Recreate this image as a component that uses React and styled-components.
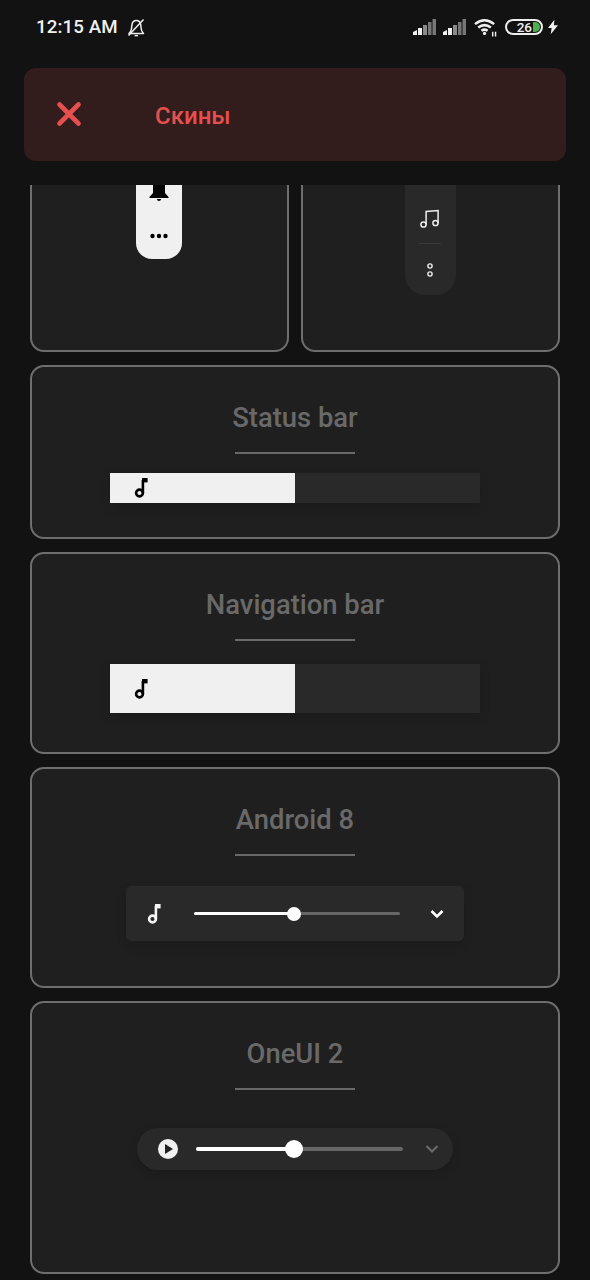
import React from "react";
import styled, { createGlobalStyle } from "styled-components";

const Global = createGlobalStyle`
  html, body { margin: 0; padding: 0; background: #121212; }
  body { font-family: Roboto, "Noto Sans", sans-serif; }
`;

const Screen = styled.div`
  width: 590px;
  height: 1280px;
  display: flex;
  flex-direction: column;
  background: #121212;
  overflow: hidden;
`;

const StatusRow = styled.div`
  height: 54px;
  flex: none;
  display: flex;
  align-items: center;
  justify-content: space-between;
  padding: 0 32px 0 36px;
  color: #f0f0f0;
`;

const StatusGroup = styled.div`
  display: flex;
  align-items: center;
  gap: ${(p) => p.$gap || 0}px;
`;

const Clock = styled.span`
  font-size: 18.7px;
  font-weight: 500;
  letter-spacing: 0.1px;
`;

const Battery = styled.div`
  width: 38px;
  height: 16px;
  box-sizing: border-box;
  border: 2px solid #eee;
  border-radius: 8px;
  display: flex;
  align-items: center;
  justify-content: flex-end;
  gap: 1px;
  padding-right: 1px;
  font-size: 13.5px;
  font-weight: 500;
  color: #eee;
`;

const BatteryFill = styled.span`
  width: 7px;
  height: 10px;
  background: #4caf50;
  border-radius: 0 5px 5px 0;
`;

const TopBar = styled.div`
  flex: none;
  height: 131px;
  padding: 14px 24px 0;
  box-sizing: border-box;
`;

const Banner = styled.div`
  height: 93px;
  border-radius: 12px;
  background: #331c1c;
  display: flex;
  align-items: center;
  padding-left: 32px;
  gap: 73px;
  color: #e5504f;
`;

const BannerTitle = styled.span`
  font-size: 24px;
  font-weight: 500;
  position: relative;
  top: 1px;
`;

const Scroller = styled.div`
  flex: 1;
  min-height: 0;
  overflow: hidden;
  padding: 0 30px;
`;

const List = styled.div`
  margin-top: -60px;
  display: flex;
  flex-direction: column;
  gap: 13px;
`;

const Pair = styled.div`
  display: grid;
  grid-template-columns: 259px 259px;
  gap: 12px;
`;

const Card = styled.div`
  box-sizing: border-box;
  height: ${(p) => p.$h}px;
  background: #1f1f1f;
  border: 2px solid #6e6e6e;
  border-radius: 14px;
  display: flex;
  flex-direction: column;
  align-items: center;
  padding-top: ${(p) => p.$top || 0}px;
`;

const Title = styled.div`
  font-size: 27.4px;
  line-height: 32px;
  font-weight: 500;
  color: #696969;
`;

const Rule = styled.div`
  width: 120px;
  height: 2px;
  background: #696969;
  margin-top: 18px;
`;

const SplitBar = styled.div`
  width: 370px;
  height: ${(p) => p.$h}px;
  margin-top: ${(p) => p.$mt}px;
  display: flex;
  background: #292929;
  box-shadow: 0 4px 10px rgba(0, 0, 0, 0.15);
`;

const SplitLight = styled.div`
  width: 185px;
  background: #f0f0f0;
  display: flex;
  align-items: center;
  padding-left: 24px;
  box-sizing: border-box;
  color: #000;
`;

const Slider = styled.div`
  display: flex;
  align-items: center;
  box-sizing: border-box;
  background: #292929;
  color: #f5f5f5;
  box-shadow: 0 4px 10px rgba(0, 0, 0, 0.15);
  width: ${(p) => p.$w}px;
  height: ${(p) => p.$h}px;
  margin-top: ${(p) => p.$mt}px;
  border-radius: ${(p) => p.$r}px;
  padding: ${(p) => p.$pad};
`;

const Spacer = styled.div`
  flex: none;
  width: ${(p) => p.$w || 0}px;
  height: ${(p) => p.$h || 0}px;
`;

const Track = styled.div`
  flex: 1;
  height: ${(p) => p.$t}px;
  background: #666;
  border-radius: 2px;
  position: relative;
`;

const TrackFill = styled.div`
  height: 100%;
  background: #fff;
  border-radius: 2px;
`;

const Thumb = styled.div`
  position: absolute;
  top: 50%;
  width: ${(p) => p.$d}px;
  height: ${(p) => p.$d}px;
  margin: ${(p) => -p.$d / 2}px 0 0 ${(p) => -p.$d / 2}px;
  border-radius: 50%;
  background: #fff;
`;

const Pill = styled.div`
  box-sizing: border-box;
  display: flex;
  flex-direction: column;
  align-items: center;
  width: ${(p) => p.$w}px;
  border-radius: 0 0 ${(p) => p.$r}px ${(p) => p.$r}px;
  background: ${(p) => p.$bg};
  height: ${(p) => p.$h}px;
  margin-right: 1px;
`;

const PillLine = styled.div`
  width: 22px;
  height: 1px;
  background: #383838;
  margin-top: 15px;
`;

const NoteSolid = () => (
  <svg width="16" height="22" viewBox="0 0 16 22" fill="none" stroke="currentColor" strokeWidth="2.6">
    <circle cx="5.5" cy="16" r="3.4" />
    <path d="M8.9 16V3" />
    <path d="M8 3.2h5.6" strokeWidth="4.4" />
  </svg>
);

const Signal = () => (
  <svg width="23" height="16" viewBox="0 0 23 16">
    <path d="M0 13 4 11V16H0Z" fill="#f0f0f0" />
    <rect x="5" y="9" width="4" height="7" fill="#f0f0f0" />
    <rect x="10" y="6" width="4" height="10" fill="#8a8a8a" />
    <rect x="15" y="3" width="3.500" height="13" fill="#777" />
    <rect x="19.500" y="0" width="3.500" height="16" fill="#777" />
  </svg>
);

const Wifi = () => (
  <svg width="23" height="19" viewBox="0 0 24 19" fill="none" stroke="#f0f0f0" strokeWidth="2.6">
    <path d="M1 6C7.500 .8 14.500 .8 21 6" />
    <path d="M4.400 9.600C8.800 6.200 13.200 6.200 17.600 9.600" />
    <path d="M7.800 12.800C10 11.300 12 11.300 14.200 12.800" />
    <circle cx="11" cy="15.700" r="1.700" fill="#f0f0f0" stroke="none" />
    <path d="M19.500 14v5M22.500 14v5" strokeWidth="1.500" />
  </svg>
);

const MutedBell = () => (
  <svg width="19" height="19" viewBox="0 0 19 19" fill="none" stroke="#eee" strokeWidth="1.5" strokeLinejoin="round">
    <path d="M2 15.5h14.5c-1.6-1.6-2.2-3-2.4-5.2L13.8 7C13.4 4.5 11.7 2.6 9.4 2.6c-2.4 0-4.2 2-4.5 4.6l-.4 3.4C4.3 12.600 3.500 14 2 15.500Z" />
    <path d="M7.600 17.600h3.400" />
    <path d="M1.500 17.500 16.500 1.500" />
  </svg>
);

const Bolt = () => (
  <svg width="10" height="16" viewBox="0 0 11 16">
    <path d="M7 0 0 9h4l-1 7 8-10H6.500L7 0Z" fill="#f0f0f0" />
  </svg>
);

const Cross = () => (
  <svg width="26" height="26" viewBox="0 0 26 26" stroke="#e5504f" strokeWidth="4.600" strokeLinecap="round" style={{ marginTop: -2 }}>
    <path d="M3.500 3.500 22.500 22.500M22.500 3.500 3.500 22.500" />
  </svg>
);

const Bell = () => (
  <svg width="20" height="22" viewBox="0 0 20 22" fill="#000">
    <path d="M4 0h12v11l3.500 4v1H.5v-1L4 11V0Z" />
    <path d="M8 17h4c0 1.200-.8 2-2 2s-2-.8-2-2Z" />
  </svg>
);

const Dots = () => (
  <svg width="18" height="6" viewBox="0 0 18 6" fill="#000">
    <circle cx="2.500" cy="3" r="2.200" />
    <circle cx="9" cy="3" r="2.200" />
    <circle cx="15.500" cy="3" r="2.200" />
  </svg>
);

const NotePair = () => (
  <svg width="20" height="19" viewBox="0 0 20 19" fill="none" stroke="#eee" strokeWidth="1.500">
    <circle cx="3.500" cy="15.500" r="2.600" />
    <circle cx="15.500" cy="14" r="2.600" />
    <path d="M6.100 15.500V2.500L18.100 1.500V14" />
  </svg>
);

const RingDots = () => (
  <svg width="8" height="16" viewBox="0 0 8 16" fill="none" stroke="#eee" strokeWidth="1.400">
    <circle cx="4" cy="4" r="2.100" />
    <circle cx="4" cy="12" r="2.100" />
  </svg>
);

const Chevron = ({ color, w }) => (
  <svg width="14" height="10" viewBox="0 0 14 10" fill="none" stroke={color} strokeWidth={w}>
    <path d="M1.500 2 7 7.500 12.500 2" />
  </svg>
);

const PlayCircle = () => (
  <svg width="20" height="20" viewBox="0 0 20 20">
    <circle cx="10" cy="10" r="10" fill="#f0f0f0" />
    <path d="M7 5v10l8-5-8-5Z" fill="#222" />
  </svg>
);

export default function App() {
  return (
    <Screen>
      <Global />
      <StatusRow>
        <StatusGroup $gap={9}>
          <Clock>12:15 AM</Clock>
          <MutedBell />
        </StatusGroup>
        <StatusGroup $gap={8}>
          <StatusGroup $gap={7}>
            <Signal />
            <Signal />
          </StatusGroup>
          <Wifi />
          <StatusGroup $gap={5}>
            <Battery>
              26
              <BatteryFill />
            </Battery>
            <Bolt />
          </StatusGroup>
        </StatusGroup>
      </StatusRow>

      <TopBar>
        <Banner>
          <Cross />
          <BannerTitle>Скины</BannerTitle>
        </Banner>
      </TopBar>

      <Scroller>
        <List>
          <Pair>
            <Card $h={227}>
              <Pill $w={46} $h={132} $r={16} $bg="#f0f0f0">
                <Spacer $h={55} />
                <Bell />
                <Spacer $h={29} />
                <Dots />
              </Pill>
            </Card>
            <Card $h={227}>
              <Pill $w={51} $h={168} $r={20} $bg="#292929">
                <Spacer $h={82} />
                <NotePair />
                <PillLine />
                <Spacer $h={18} />
                <RingDots />
              </Pill>
            </Card>
          </Pair>

          <Card $h={174} $top={35}>
            <Title>Status bar</Title>
            <Rule />
            <SplitBar $h={30} $mt={19}>
              <SplitLight>
                <NoteSolid />
              </SplitLight>
            </SplitBar>
          </Card>

          <Card $h={202} $top={35}>
            <Title>Navigation bar</Title>
            <Rule />
            <SplitBar $h={49} $mt={23}>
              <SplitLight>
                <NoteSolid />
              </SplitLight>
            </SplitBar>
          </Card>

          <Card $h={221} $top={35}>
            <Title>Android 8</Title>
            <Rule />
            <Slider $w={338} $h={55} $mt={30} $r={5} $pad="0 20px 0 21px">
              <NoteSolid />
              <Spacer $w={31} />
              <Track $t={3}>
                <TrackFill style={{ width: "48.500%" }} />
                <Thumb $d={14} style={{ left: "48.500%" }} />
              </Track>
              <Spacer $w={30} />
              <Chevron color="#fff" w={2.600} />
            </Slider>
          </Card>

          <Card $h={273} $top={35}>
            <Title>OneUI 2</Title>
            <Rule />
            <Slider $w={316} $h={42} $mt={38} $r={21} $pad="0 14px 0 21px">
              <PlayCircle />
              <Spacer $w={18} />
              <Track $t={4}>
                <TrackFill style={{ width: "47.500%" }} />
                <Thumb $d={18} style={{ left: "47.500%" }} />
              </Track>
              <Spacer $w={22} />
              <Chevron color="#6a6a6a" w={2.200} />
            </Slider>
          </Card>
        </List>
      </Scroller>
    </Screen>
  );
}
